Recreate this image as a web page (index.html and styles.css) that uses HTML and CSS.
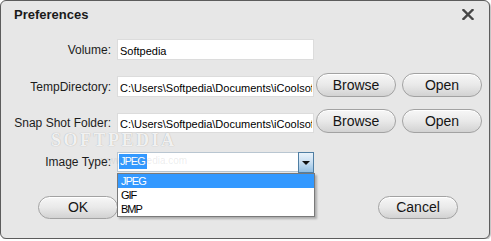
FILE: index.html
```html
<!DOCTYPE html>
<html lang="en">
<head>
  <meta charset="UTF-8" />
  <title>Preferences</title>
  <link rel="stylesheet" href="styles.css">
</head>
<body>

  <div class="window">
    <div class="titlebar">
      <span class="title">Preferences</span>
      <span class="close" title="Close">
        <svg width="12" height="11" viewBox="0 0 12 11">
          <path d="M1.5 1 L10.5 10 M10.5 1 L1.5 10" stroke="#454545" stroke-width="2.4" stroke-linecap="square"/>
        </svg>
      </span>
    </div>

    <div class="form">
      <div class="row row-volume">
        <label class="label">Volume:</label>
        <input class="field" type="text" value="Softpedia">
      </div>
      <div class="row row-temp">
        <label class="label">TempDirectory:</label>
        <input class="field" type="text" value="C:\Users\Softpedia\Documents\iCoolsoft">
        <button class="btn btn-browse">Browse</button>
        <button class="btn">Open</button>
      </div>
      <div class="row row-snap">
        <label class="label">Snap Shot Folder:</label>
        <input class="field" type="text" value="C:\Users\Softpedia\Documents\iCoolsoft">
        <button class="btn btn-browse">Browse</button>
        <button class="btn">Open</button>
      </div>
      <div class="row row-type">
        <label class="label">Image Type:</label>
        <div class="select">
          <span class="select-value"><span class="selected-text">JPEG</span></span>
          <span class="select-arrow"></span>
        </div>
      </div>
    </div>

    <div class="actions">
      <button class="btn">OK</button>
      <button class="btn">Cancel</button>
    </div>

    <ul class="dropdown">
      <li class="active">JPEG</li>
      <li>GIF</li>
      <li>BMP</li>
    </ul>

    <div class="watermark">SOFTPEDIA</div>
    <div class="watermark-url">www.softpedia.com</div>
  </div>

</body>
</html>
```

FILE: styles.css
```css
* {
  box-sizing: border-box;
}

body {
  margin: 0;
  font-family: "Liberation Sans", Arial, sans-serif;
  background: #ffffff;
}

.window {
  position: relative;
  width: 490px;
  height: 239px;
  background: #e7e7e7;
  border: 1px solid #5c5c5c;
  border-radius: 6px;
  box-shadow: 1px 1px 1px rgba(0, 0, 0, 0.25);
}

.titlebar {
  display: flex;
  justify-content: space-between;
  align-items: flex-start;
  height: 38px;
  padding: 0 15px 0 13px;
}

.title {
  padding-top: 6px;
  font-size: 13px;
  font-weight: bold;
  line-height: 16px;
  color: #1a1a1a;
}

.close {
  margin-top: 8px;
  width: 12px;
  height: 11px;
  cursor: pointer;
}

.close svg {
  display: block;
}

.row {
  display: flex;
  align-items: flex-end;
}

.row-volume {
  height: 21px;
  margin-bottom: 13px;
}

.row-temp {
  height: 24px;
  margin-bottom: 12px;
}

.row-snap {
  height: 24px;
  margin-bottom: 19px;
}

.row-type {
  height: 20px;
}

.label {
  width: 110px;
  margin-right: 6px;
  height: 21px;
  line-height: 23px;
  text-align: right;
  font-size: 12px;
  color: #1c1c1c;
}

.row-snap .label,
.row-type .label {
  height: 20px;
  line-height: 21px;
}

.field {
  width: 197px;
  height: 21px;
  margin: 0;
  padding: 2px 1px 0 2px;
  border: 1px solid #dcdcdc;
  background: #fff;
  font-family: "Liberation Sans", Arial, sans-serif;
  font-size: 11px;
  color: #000;
  outline: none;
}

.row-snap .field {
  height: 20px;
}

.btn {
  width: 80px;
  height: 24px;
  margin: 0;
  padding: 0 0 1px;
  border: 1px solid #a2a2a2;
  border-radius: 12px;
  background: linear-gradient(#f7f7f7, #e9e9e9 50%, #d2d2d2);
  box-shadow: inset 0 1px 0 #ffffff;
  font-family: "Liberation Sans", Arial, sans-serif;
  font-size: 14px;
  color: #151515;
  cursor: pointer;
}

.btn-browse {
  margin-left: 2px;
  margin-right: 6px;
}

.select {
  display: flex;
  width: 197px;
  height: 20px;
  border: 1px solid #b9c6d1;
  border-right: none;
  background: #fff;
}

.select-value {
  flex: 1;
  padding: 1px 0 0 1px;
  font-size: 11px;
  letter-spacing: -1px;
  line-height: 15px;
}

.selected-text {
  display: inline-block;
  padding: 0 2px 0 1px;
  background: #3399ff;
  color: #fff;
}

.select-arrow {
  position: relative;
  width: 16px;
  height: 21px;
  margin-top: -1px;
  border: 1px solid #4f7ea3;
  background: linear-gradient(#eaf3fb, #c8def1 50%, #93bfe3);
}

.select-arrow::after {
  content: "";
  position: absolute;
  left: 3px;
  top: 8px;
  border-left: 4px solid transparent;
  border-right: 4px solid transparent;
  border-top: 4px solid #111;
}

.actions {
  display: flex;
  justify-content: space-between;
  margin-top: 24px;
  padding: 0 31px 0 37px;
}

.actions .btn {
  height: 23px;
}

/* open list of the Image Type select */
.dropdown {
  position: absolute;
  left: 116px;
  top: 172px;
  width: 198px;
  margin: 0;
  padding: 0;
  list-style: none;
  border: 1px solid #7a7a7a;
  background: #fff;
  box-shadow: 2px 2px 2px rgba(0, 0, 0, 0.25);
}

.dropdown li {
  height: 14px;
  padding-left: 3px;
  font-size: 11px;
  letter-spacing: -1px;
  line-height: 14px;
  color: #000;
}

.dropdown li.active {
  background: #3399ff;
  color: #fff;
}

/* screenshot watermark */
.watermark {
  position: absolute;
  left: 50px;
  top: 129px;
  font-family: "Liberation Serif", serif;
  font-size: 18px;
  font-weight: bold;
  letter-spacing: 2.5px;
  color: rgba(255, 255, 255, 0.85);
  text-shadow: 0 0 1px rgba(0, 0, 0, 0.3);
  pointer-events: none;
}

.watermark-url {
  position: absolute;
  left: 100px;
  top: 154px;
  font-size: 10px;
  color: rgba(120, 120, 120, 0.15);
  pointer-events: none;
}
```
